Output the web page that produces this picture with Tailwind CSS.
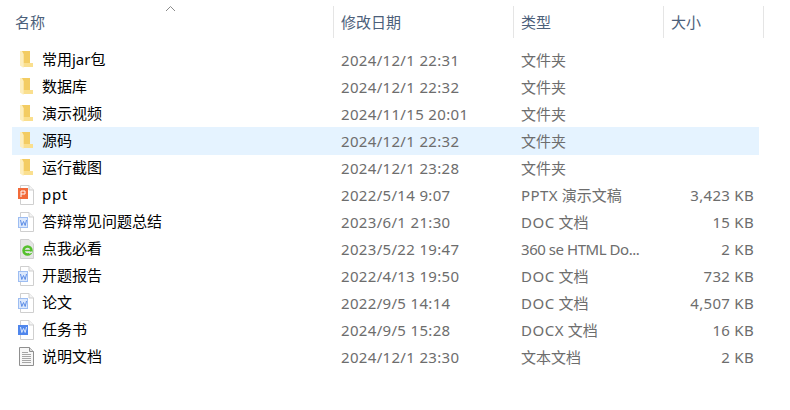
<!DOCTYPE html>
<html><head><meta charset="utf-8"><script src="https://cdn.jsdelivr.net/npm/@tailwindcss/browser@4"></script></head>
<body class="bg-white">
<svg width="0" height="0" class="absolute">
<defs>
<symbol id="folder" viewBox="0 0 13 17"><path d="M0 0H10V13H13V16H3L0 14Z" fill="#fbe7a8"/><path d="M2 0H10V12H3.500V3Z" fill="#f3cc62"/><path d="M3.500 12H13V16H3.500Z" fill="#fadf8e"/><path d="M0 0H1.500L3.500 3V17L0 14.500Z" fill="#fdeebd"/></symbol>
<symbol id="page" viewBox="0 0 18 20"><path d="M3.500 .5H12L16.500 5V19.500H3.500Z" fill="#fff" stroke="#cfcfcf"/><path d="M12 .5V5H16.500" fill="#f4f4f4" stroke="#cfcfcf"/></symbol>
</defs></svg>
<div class="w-[790px] h-[410px] overflow-hidden relative text-[15px] leading-[27px] text-[#6d6d6d]" style="font-family:'Noto Sans','Noto Sans CJK SC',sans-serif">
<div class="absolute left-[165px] top-[5px]"><svg width="11" height="7" viewBox="0 0 11 7"><path d="M1 6L5.500 1.500L10 6" fill="none" stroke="#8a8a8a"/></svg></div>
<div class="flex h-[32px] mt-[6px] ml-[7px] text-[#4c607a] leading-[32px]">
<div class="w-[327px] pl-[8px] border-r border-[#e5e5e5] h-[32px] shrink-0">名称</div>
<div class="w-[180px] pl-[7px] border-r border-[#e5e5e5] shrink-0">修改日期</div>
<div class="w-[150px] pl-[7px] border-r border-[#e5e5e5] shrink-0">类型</div>
<div class="w-[100px] pl-[7px] border-r border-[#e5e5e5] shrink-0">大小</div>
</div>
<div class="mt-[8px] ml-[12px] w-[747px]">
<div class="flex h-[27px]"><div class="w-[329px] pl-[8px] flex items-center text-black shrink-0"><svg class="w-[13px] h-[17px] mr-[9px]"><use href="#folder"/></svg>常用jar包</div><div class="w-[180px] pt-px tracking-[0.33px] shrink-0">2024/12/1 22:31</div><div class="w-[148px] pt-px shrink-0">文件夹</div><div class="w-[85px] pt-px text-right"></div></div>
<div class="flex h-[27px]"><div class="w-[329px] pl-[8px] flex items-center text-black shrink-0"><svg class="w-[13px] h-[17px] mr-[9px]"><use href="#folder"/></svg>数据库</div><div class="w-[180px] pt-px tracking-[0.33px] shrink-0">2024/12/1 22:32</div><div class="w-[148px] pt-px shrink-0">文件夹</div><div class="w-[85px] pt-px text-right"></div></div>
<div class="flex h-[27px]"><div class="w-[329px] pl-[8px] flex items-center text-black shrink-0"><svg class="w-[13px] h-[17px] mr-[9px]"><use href="#folder"/></svg>演示视频</div><div class="w-[180px] pt-px tracking-[0.33px] shrink-0">2024/11/15 20:01</div><div class="w-[148px] pt-px shrink-0">文件夹</div><div class="w-[85px] pt-px text-right"></div></div>
<div class="flex h-[28px] pb-px bg-[#e5f3ff] -mb-px"><div class="w-[329px] pl-[8px] flex items-center text-black shrink-0"><svg class="w-[13px] h-[17px] mr-[9px]"><use href="#folder"/></svg>源码</div><div class="w-[180px] pt-px tracking-[0.33px] shrink-0">2024/12/1 22:32</div><div class="w-[148px] pt-px shrink-0">文件夹</div><div class="w-[85px] pt-px text-right"></div></div>
<div class="flex h-[27px]"><div class="w-[329px] pl-[8px] flex items-center text-black shrink-0"><svg class="w-[13px] h-[17px] mr-[9px]"><use href="#folder"/></svg>运行截图</div><div class="w-[180px] pt-px tracking-[0.33px] shrink-0">2024/12/1 23:28</div><div class="w-[148px] pt-px shrink-0">文件夹</div><div class="w-[85px] pt-px text-right"></div></div>
<div class="flex h-[27px]"><div class="w-[329px] pl-[5px] flex items-center text-black shrink-0"><span class="relative w-[18px] h-[20px] mr-[7px]"><svg class="w-[18px] h-[20px]"><use href="#page"/></svg><span class="absolute left-px top-[3px] w-[10px] h-[11px] bg-[#f26b3a]"></span><svg class="absolute left-[3px] top-[5px]" width="6" height="7" viewBox="0 0 6 7"><path d="M1 7V1H5V4H1" fill="none" stroke="#fff"/></svg></span><span class="tracking-[0.7px]">ppt</span></div><div class="w-[180px] pt-px tracking-[0.33px] shrink-0">2022/5/14 9:07</div><div class="w-[148px] pt-px shrink-0"><span class="tracking-[0.4px]">PPTX</span> 演示文稿</div><div class="w-[85px] pt-px tracking-[0.3px] text-right">3,423 KB</div></div>
<div class="flex h-[27px]"><div class="w-[329px] pl-[5px] flex items-center text-black shrink-0"><span class="relative w-[18px] h-[20px] mr-[7px]"><svg class="w-[18px] h-[20px]"><use href="#page"/></svg><span class="absolute left-px top-[5px] w-[10px] h-[11px] bg-[#dbe8fc] border border-[#9dbdf2]"></span><svg class="absolute left-[3px] top-[8px]" width="7" height="6" viewBox="0 0 7 6"><path d="M.5 0L1.800 5.500L3.500 1.500L5.200 5.500L6.500 0" fill="none" stroke="#5b8ce6"/></svg></span>答辩常见问题总结</div><div class="w-[180px] pt-px tracking-[0.33px] shrink-0">2023/6/1 21:30</div><div class="w-[148px] pt-px shrink-0"><span class="tracking-[0.5px]">DOC</span> 文档</div><div class="w-[85px] pt-px tracking-[0.3px] text-right">15 KB</div></div>
<div class="flex h-[27px]"><div class="w-[329px] pl-[5px] flex items-center text-black shrink-0"><span class="relative w-[18px] h-[20px] mr-[7px]"><svg class="w-[18px] h-[20px]"><path d="M3.500 .5H12L16.500 5V19.500H3.500Z" fill="#e6e6e6" stroke="#cfcfcf"/></svg><svg class="absolute left-[5px] top-[6px]" width="11" height="11" viewBox="0 0 11 11"><circle cx="5.500" cy="5.500" r="4" fill="none" stroke="#55c02c" stroke-width="2.500"/><path d="M2 5.500H9" stroke="#55c02c" stroke-width="1.500"/><path d="M7 8L10 7" stroke="#e6e6e6" stroke-width="1.500"/></svg></span>点我必看</div><div class="w-[180px] pt-px tracking-[0.33px] shrink-0">2023/5/22 19:47</div><div class="w-[148px] pt-px tracking-[-0.45px] shrink-0">360 se HTML Do...</div><div class="w-[85px] pt-px tracking-[0.3px] text-right">2 KB</div></div>
<div class="flex h-[27px]"><div class="w-[329px] pl-[5px] flex items-center text-black shrink-0"><span class="relative w-[18px] h-[20px] mr-[7px]"><svg class="w-[18px] h-[20px]"><use href="#page"/></svg><span class="absolute left-px top-[5px] w-[10px] h-[11px] bg-[#dbe8fc] border border-[#9dbdf2]"></span><svg class="absolute left-[3px] top-[8px]" width="7" height="6" viewBox="0 0 7 6"><path d="M.5 0L1.800 5.500L3.500 1.500L5.200 5.500L6.500 0" fill="none" stroke="#5b8ce6"/></svg></span>开题报告</div><div class="w-[180px] pt-px tracking-[0.33px] shrink-0">2022/4/13 19:50</div><div class="w-[148px] pt-px shrink-0"><span class="tracking-[0.5px]">DOC</span> 文档</div><div class="w-[85px] pt-px tracking-[0.3px] text-right">732 KB</div></div>
<div class="flex h-[27px]"><div class="w-[329px] pl-[5px] flex items-center text-black shrink-0"><span class="relative w-[18px] h-[20px] mr-[7px]"><svg class="w-[18px] h-[20px]"><use href="#page"/></svg><span class="absolute left-px top-[5px] w-[10px] h-[11px] bg-[#dbe8fc] border border-[#9dbdf2]"></span><svg class="absolute left-[3px] top-[8px]" width="7" height="6" viewBox="0 0 7 6"><path d="M.5 0L1.800 5.500L3.500 1.500L5.200 5.500L6.500 0" fill="none" stroke="#5b8ce6"/></svg></span>论文</div><div class="w-[180px] pt-px tracking-[0.33px] shrink-0">2022/9/5 14:14</div><div class="w-[148px] pt-px shrink-0"><span class="tracking-[0.5px]">DOC</span> 文档</div><div class="w-[85px] pt-px tracking-[0.3px] text-right">4,507 KB</div></div>
<div class="flex h-[27px]"><div class="w-[329px] pl-[5px] flex items-center text-black shrink-0"><span class="relative w-[18px] h-[20px] mr-[7px]"><svg class="w-[18px] h-[20px]"><use href="#page"/></svg><span class="absolute left-px top-[5px] w-[10px] h-[10px] bg-[#4f86ec]"></span><svg class="absolute left-[3px] top-[7px]" width="7" height="6" viewBox="0 0 7 6"><path d="M.5 0L1.800 5.500L3.500 1.500L5.200 5.500L6.500 0" fill="none" stroke="#dbe8fc"/></svg></span>任务书</div><div class="w-[180px] pt-px tracking-[0.33px] shrink-0">2024/9/5 15:28</div><div class="w-[148px] pt-px shrink-0"><span class="tracking-[0.5px]">DOCX</span> 文档</div><div class="w-[85px] pt-px tracking-[0.3px] text-right">16 KB</div></div>
<div class="flex h-[27px]"><div class="w-[329px] pl-[7px] flex items-center text-black shrink-0"><svg class="w-[15px] h-[19px] mr-[8px]" viewBox="0 0 15 19"><path d="M.5 .5H10.500L14.500 4.500V18.500H.5Z" fill="#f7f7f7" stroke="#8f8f8f"/><path d="M10.500 .5V4.500H14.500" fill="#ddd" stroke="#8f8f8f"/><path d="M3 5.500H9M3 7.500H12M3 9.500H12M3 11.500H12M3 13.500H12M3 15.500H12" stroke="#a5a5a5"/></svg>说明文档</div><div class="w-[180px] pt-px tracking-[0.33px] shrink-0">2024/12/1 23:30</div><div class="w-[148px] pt-px shrink-0">文本文档</div><div class="w-[85px] pt-px tracking-[0.3px] text-right">2 KB</div></div>
</div>
</div>
</body></html>
